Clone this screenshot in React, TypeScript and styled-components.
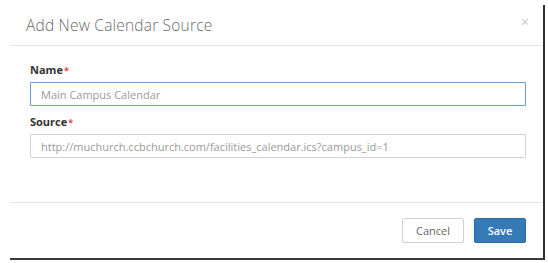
import styled, { createGlobalStyle } from "styled-components";

const GlobalStyle = createGlobalStyle`
  html, body {
    margin: 0;
    padding: 0;
    background: #ffffff;
  }
  body {
    font-family: "Open Sans", "Liberation Sans", sans-serif;
  }
`;

function App() {
  return (
    <>
      <GlobalStyle />
      <Page>
        <Modal>
          <Header>
            <Title>Add New Calendar Source</Title>
            <CloseButton aria-label="Close">×</CloseButton>
          </Header>
          <Body>
            <Field>
              <Label>
                Name<Required>*</Required>
              </Label>
              <Input focused placeholder="Main Campus Calendar" />
            </Field>
            <Field>
              <Label>
                Source<Required>*</Required>
              </Label>
              <Input placeholder="http://muchurch.ccbchurch.com/facilities_calendar.ics?campus_id=1" />
            </Field>
          </Body>
          <Footer>
            <Button>Cancel</Button>
            <Button primary>Save</Button>
          </Footer>
        </Modal>
      </Page>
    </>
  );
}

const Page = styled.div`
  width: 548px;
  height: 263px;
  box-sizing: border-box;
  padding: 5px 0 0 10px;
`;

const Modal = styled.div`
  width: 535px;
  height: 255px;
  box-sizing: border-box;
  background: #ffffff;
  border-right: 2px solid #2f2f2f;
  border-bottom: 2px solid #3a3a3a;
  display: flex;
  flex-direction: column;
`;

const Header = styled.div`
  height: 41px;
  box-sizing: border-box;
  border-bottom: 1px solid #e5e5e5;
  display: flex;
  align-items: flex-start;
  justify-content: space-between;
  padding: 8px 14px 0 16px;
`;

const Title = styled.h4`
  margin: 0;
  font-size: 15.5px;
  font-weight: 300;
  color: #6a6a6a;
  letter-spacing: 0.2px;
  line-height: 24px;
`;

const CloseButton = styled.button`
  border: none;
  background: transparent;
  padding: 0;
  font-family: "Open Sans", "Liberation Sans", sans-serif;
  font-size: 14px;
  line-height: 18px;
  color: #c8c8c8;
  cursor: pointer;
`;

const Body = styled.div`
  flex: 1;
  display: flex;
  flex-direction: column;
  gap: 9px;
  padding: 17px 17px 0 20px;
  border-bottom: 1px solid #e5e5e5;
`;

const Field = styled.div`
  display: flex;
  flex-direction: column;
  gap: 5px;
`;

const Label = styled.label`
  font-size: 11px;
  font-weight: 700;
  color: #333333;
  line-height: 13px;
`;

const Required = styled.span`
  color: #e04848;
  font-size: 9px;
  margin-left: 1px;
`;

const Input = styled.input<{ focused?: boolean }>`
  width: 496px;
  height: 24px;
  box-sizing: border-box;
  padding: 0 10px;
  font-family: "Open Sans", "Liberation Sans", sans-serif;
  font-size: 11px;
  border: 1px solid ${(p) => (p.focused ? "#6b9bcc" : "#d4d4d4")};
  border-radius: 1px;
  outline: none;
  background: #ffffff;
  &::placeholder {
    color: #9a9a9a;
  }
`;

const Footer = styled.div`
  height: 55px;
  box-sizing: border-box;
  display: flex;
  justify-content: flex-end;
  align-items: flex-start;
  gap: 10px;
  padding: 15px 17px 0 0;
`;

const Button = styled.button<{ primary?: boolean }>`
  height: 25px;
  box-sizing: border-box;
  padding: 0 12px;
  min-width: ${(p) => (p.primary ? "52px" : "62px")};
  font-family: "Open Sans", "Liberation Sans", sans-serif;
  font-size: 11px;
  font-weight: ${(p) => (p.primary ? 600 : 400)};
  border-radius: 2px;
  border: 1px solid ${(p) => (p.primary ? "#2e6da4" : "#d0d0d0")};
  background: ${(p) => (p.primary ? "#337ab7" : "#ffffff")};
  color: ${(p) => (p.primary ? "#ffffff" : "#666666")};
  cursor: pointer;
`;

export default App;
